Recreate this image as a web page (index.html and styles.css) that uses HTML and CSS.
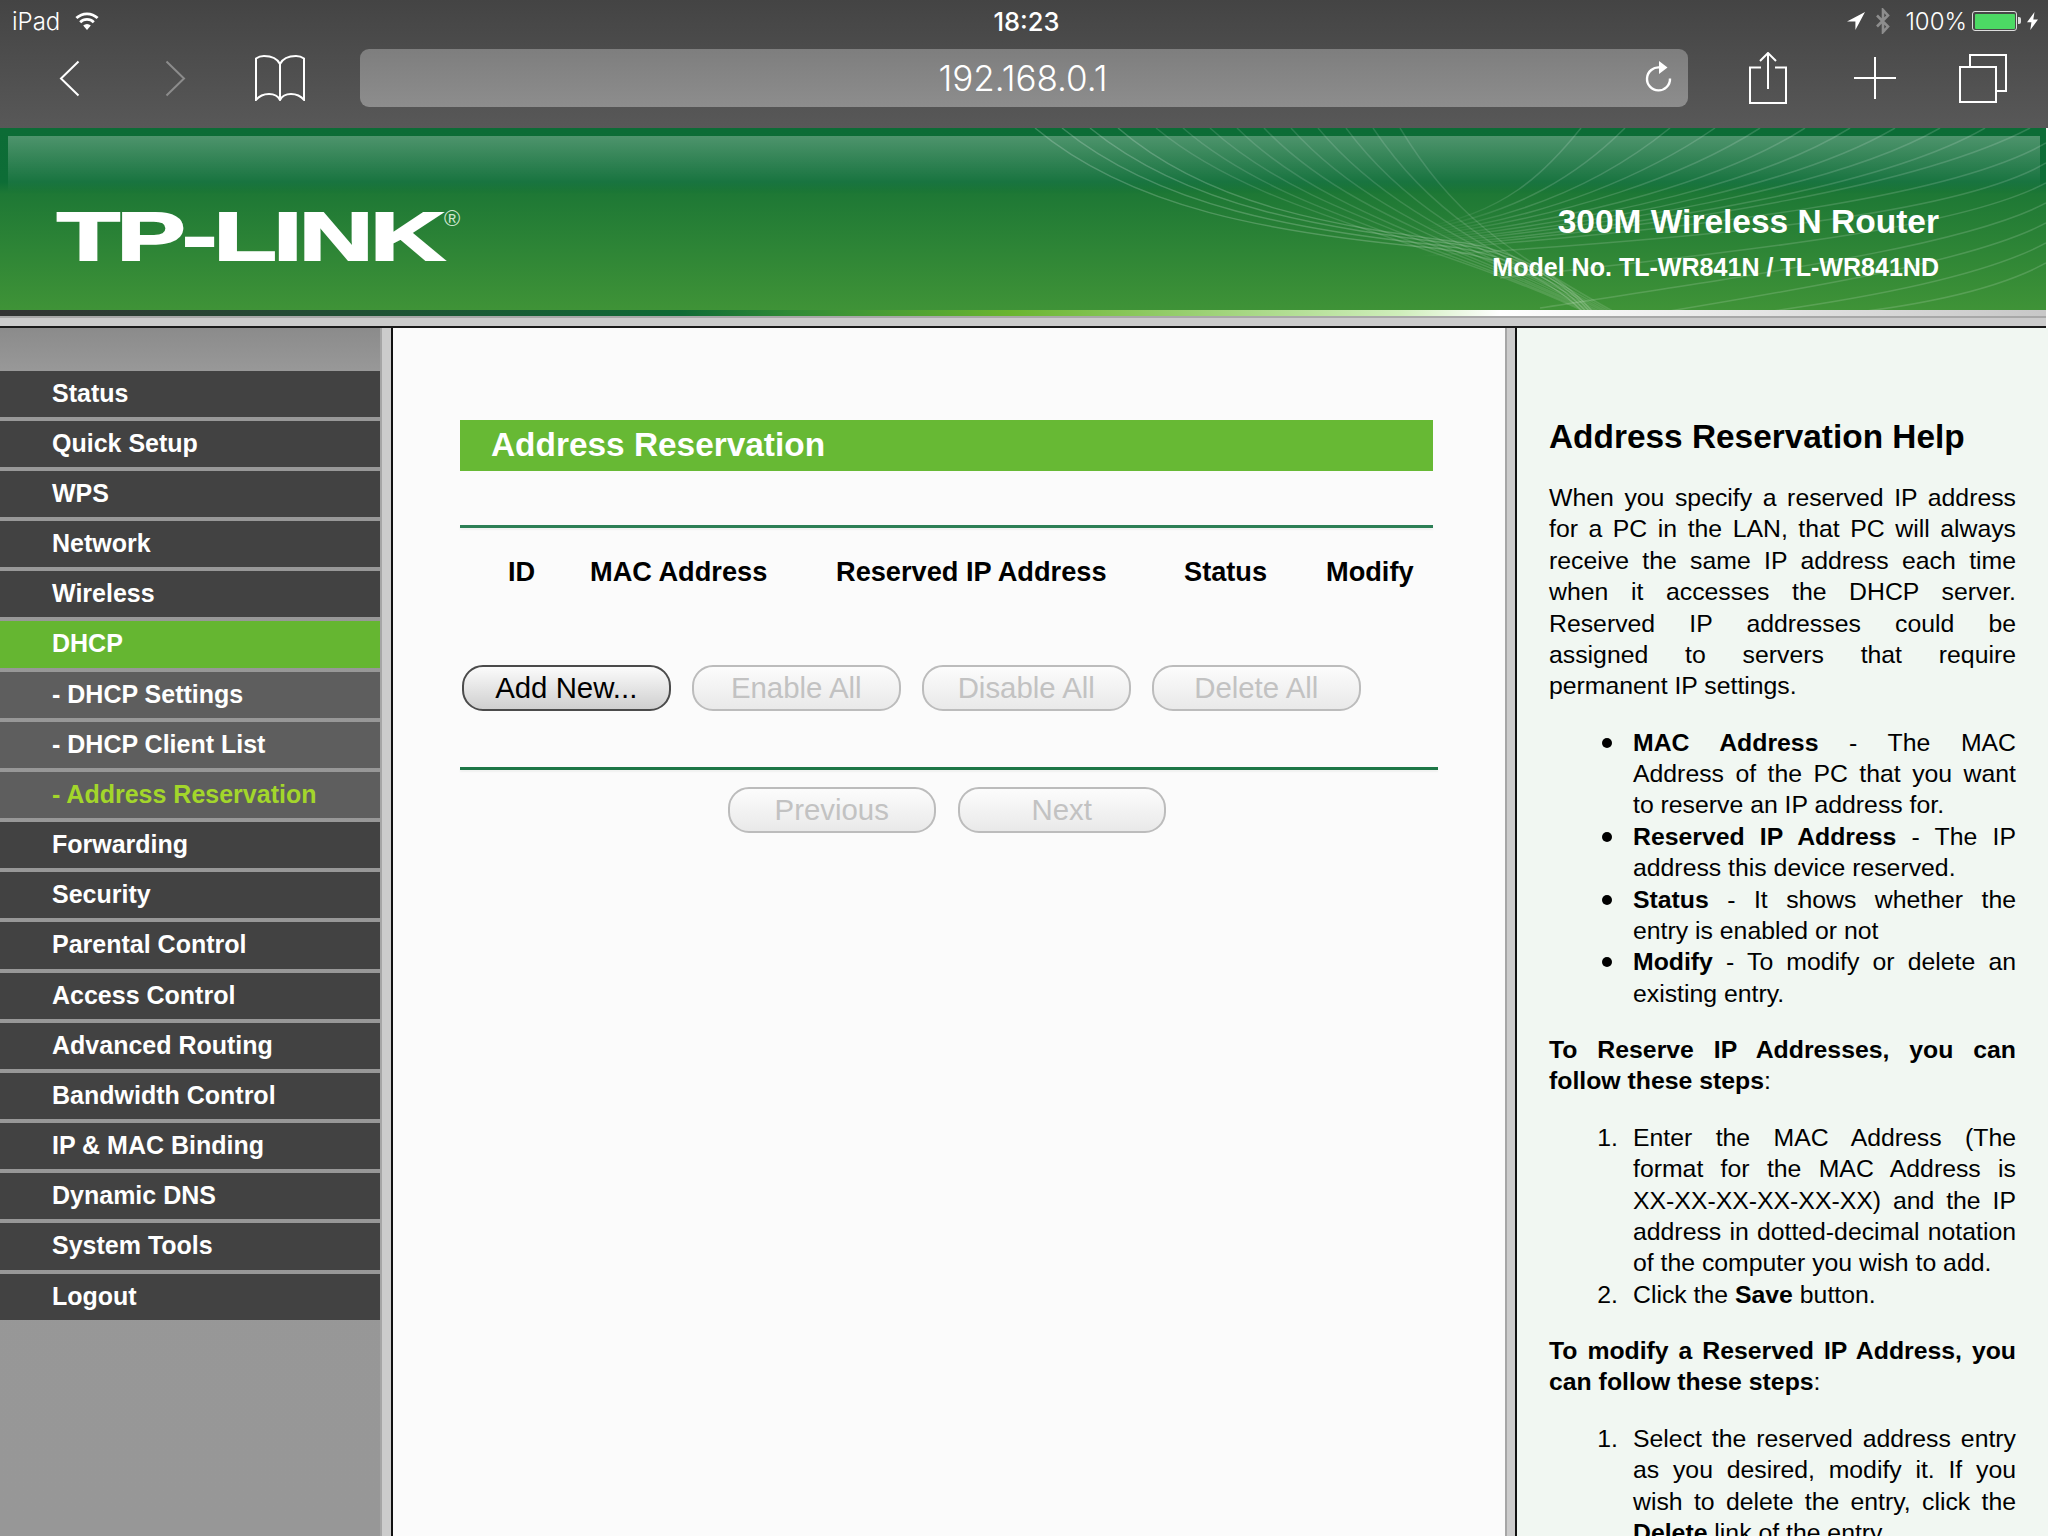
FILE: index.html
```html
<!DOCTYPE html>
<html lang="en">
<head>
<meta charset="utf-8">
<title>Address Reservation</title>
<link rel="stylesheet" href="styles.css">
</head>
<body>
<header class="chrome">
  <div class="status">
    <div class="status-left">
      <span class="carrier">iPad</span>
      <svg class="ic-wifi" viewBox="0 0 24 18"><path d="M12 18 8.200 13.600a5.400 5.400 0 0 1 7.600 0Z" fill="#fff"/><path d="M5.200 10.200a9.800 9.800 0 0 1 13.600 0M1.400 6.100a15.200 15.200 0 0 1 21.200 0" fill="none" stroke="#fff" stroke-width="2.800"/></svg>
    </div>
    <span class="clock">18:23</span>
    <div class="status-right">
      <svg class="ic-loc" viewBox="0 0 18 18"><path d="M18 0 0 9.600h8.400V18Z" fill="#fff"/></svg>
      <svg class="ic-bt" viewBox="0 0 16 26"><path d="M2 7.500 13 18.500 8 24V2l5 5.500L2 18.500" fill="none" stroke="#8d8d8d" stroke-width="2.600"/></svg>
      <span class="pct">100%</span>
      <span class="battery"><span class="battery-fill"></span></span>
      <svg class="ic-bolt" viewBox="0 0 11 18"><path d="M7.500 0 0 10.300h4.400L3.300 18 11 7.400H6.300Z" fill="#fff"/></svg>
    </div>
  </div>
  <nav class="tools">
    <svg class="ic-back" viewBox="0 0 21 37"><path d="M19.500 1.500 2 18.500 19.500 35.500" fill="none" stroke="#fff" stroke-width="2"/></svg>
    <svg class="ic-fwd" viewBox="0 0 21 37"><path d="M1.500 1.500 19 18.500 1.500 35.500" fill="none" stroke="#8c8c8c" stroke-width="2"/></svg>
    <svg class="ic-book" viewBox="0 0 50 46"><path d="M25 9C22 3 15 1 9 1 6 1 3 2 1 3.500V45C5 40 10 39 14 39 19 39 23 41 25 45 27 41 31 39 36 39 40 39 45 40 49 45V3.500C47 2 44 1 41 1 35 1 28 3 25 9ZM25 9V44" fill="none" stroke="#fff" stroke-width="2"/></svg>
    <div class="address">
      <span class="url">192.168.0.1</span>
      <svg class="ic-reload" viewBox="0 0 27 31"><path d="M15 6.500A11.500 11.500 0 1 0 25 17.500" fill="none" stroke="#fff" stroke-width="2.400"/><path d="M14 0 22.500 6.500 14 13Z" fill="#fff"/></svg>
    </div>
    <svg class="ic-share" viewBox="0 0 38 52"><path d="M12 15.500H1V51H37V15.500H26M19 37V2M11 9 19 1 27 9" fill="none" stroke="#fff" stroke-width="2"/></svg>
    <svg class="ic-plus" viewBox="0 0 42 42"><path d="M21 0V42M0 21H42" fill="none" stroke="#fff" stroke-width="2"/></svg>
    <svg class="ic-tabs" viewBox="0 0 48 49"><path d="M1 13H37V48H1ZM11 13V1H47V37H37" fill="none" stroke="#fff" stroke-width="2"/></svg>
  </nav>
</header>

<section class="banner">
  <svg class="waves" viewBox="0 0 2046 188" preserveAspectRatio="none">
    <defs>
      <linearGradient id="fan-fade" gradientUnits="userSpaceOnUse" x1="1420" y1="0" x2="1520" y2="0">
        <stop offset="0" stop-color="#fff" stop-opacity="0"/>
        <stop offset="1" stop-color="#fff" stop-opacity=".15"/>
      </linearGradient>
    </defs>
    <g class="wave-lines edge">
      <path d="M1035 0C1130 80 1270 105 1434 120C1500 128 1560 155 1590 192"/>
      <path d="M1062 0C1160 80 1300 102 1445 118C1510 126 1565 155 1593 192"/>
      <path d="M1090 0C1190 82 1330 100 1455 116C1515 124 1570 155 1596 192"/>
      <path d="M1118 0C1215 84 1355 100 1465 115C1520 124 1572 155 1599 192"/>
    </g>
    <g class="wave-lines">
      <path d="M1156 0C1263 89 1431 108 1602 192"/>
      <path d="M1183 0C1284 88 1438 110 1605 192"/>
      <path d="M1210 0C1305 87 1446 111 1608 192"/>
      <path d="M1237 0C1325 87 1454 113 1611 192"/>
      <path d="M1264 0C1346 86 1462 114 1614 192"/>
      <path d="M1291 0C1367 85 1469 116 1617 192"/>
      <path d="M1318 0C1388 84 1477 117 1620 192"/>
      <path d="M1346 0C1408 84 1485 119 1623 192"/>
      <path d="M1373 0C1429 83 1492 120 1626 192"/>
      <path d="M1400 0C1450 82 1500 122 1629 192"/>
    </g>
    <g class="fan-lines" stroke="url(#fan-fade)">
      <path d="M1581 0C1545 45 1505 85 1420 100"/>
      <path d="M1625 0C1580 45 1520 85 1420 102"/>
      <path d="M1670 0C1615 45 1535 88 1420 104"/>
      <path d="M1715 0C1650 45 1550 90 1420 106"/>
      <path d="M1760 0C1690 45 1570 90 1420 108"/>
      <path d="M1805 0C1730 48 1590 92 1420 110"/>
      <path d="M1850 0C1770 50 1610 93 1420 112"/>
      <path d="M1895 0C1810 50 1630 95 1420 114"/>
      <path d="M1940 0C1850 52 1650 95 1420 116"/>
      <path d="M1985 0C1890 55 1670 97 1420 118"/>
      <path d="M2030 0C1925 55 1690 98 1420 120"/>
      <path d="M2046 15C1950 70 1710 100 1420 122"/>
      <path d="M2046 35C1960 85 1740 108 1420 128"/>
      <path d="M2046 55C1960 100 1770 120 1500 150"/>
      <path d="M2046 75C1970 115 1800 140 1540 180"/>
      <path d="M2046 95C1980 130 1840 155 1640 188"/>
      <path d="M2046 115C1990 145 1880 170 1720 190"/>
      <path d="M2046 135C2000 160 1920 180 1800 190"/>
    </g>
  </svg>
  <div class="gloss"></div>
  <div class="banner-row">
    <div class="logo"><span class="logo-text">TP-LINK</span><span class="logo-reg">®</span></div>
    <div class="product">
      <div class="product-name">300M Wireless N Router</div>
      <div class="product-model">Model No. TL-WR841N / TL-WR841ND</div>
    </div>
  </div>
  <div class="strip"></div>
</section>
<div class="divider"></div>

<main class="frames">
  <aside class="sidebar">
    <ul class="menu">
      <li class="item">Status</li>
      <li class="item">Quick Setup</li>
      <li class="item">WPS</li>
      <li class="item">Network</li>
      <li class="item">Wireless</li>
      <li class="item active">DHCP</li>
      <li class="item sub">- DHCP Settings</li>
      <li class="item sub">- DHCP Client List</li>
      <li class="item sub current">- Address Reservation</li>
      <li class="item">Forwarding</li>
      <li class="item">Security</li>
      <li class="item">Parental Control</li>
      <li class="item">Access Control</li>
      <li class="item">Advanced Routing</li>
      <li class="item">Bandwidth Control</li>
      <li class="item">IP &amp; MAC Binding</li>
      <li class="item">Dynamic DNS</li>
      <li class="item">System Tools</li>
      <li class="item">Logout</li>
    </ul>
  </aside>
  <div class="gutter"></div>
  <section class="content">
    <h2 class="title">Address Reservation</h2>
    <div class="rule"></div>
    <div class="thead">
      <span>ID</span><span>MAC Address</span><span>Reserved IP Address</span><span>Status</span><span>Modify</span>
    </div>
    <div class="actions">
      <button class="btn">Add New...</button>
      <button class="btn off">Enable All</button>
      <button class="btn off">Disable All</button>
      <button class="btn off">Delete All</button>
    </div>
    <div class="rule wide"></div>
    <div class="actions pager">
      <button class="btn off">Previous</button>
      <button class="btn off">Next</button>
    </div>
  </section>
  <div class="gutter narrow"></div>
  <section class="help">
    <h1>Address Reservation Help</h1>
    <p class="filled">When you specify a reserved IP address for a PC in the LAN, that PC will always receive the same IP address each time when it accesses the DHCP server. <span class="line">Reserved IP addresses could be</span> <span class="line">assigned to servers that require</span> <span class="line end">permanent IP settings.</span></p>
    <ul>
      <li><b>MAC Address</b> - The MAC Address of the PC that you want to reserve an IP address for.</li>
      <li><b>Reserved IP Address</b> - The IP address this device reserved.</li>
      <li><b>Status</b> - It shows whether the entry is enabled or not</li>
      <li><b>Modify</b> - To modify or delete an existing entry.</li>
    </ul>
    <p><b>To Reserve IP Addresses, you can follow these steps</b>:</p>
    <ol>
      <li>Enter the MAC Address (The format for the MAC Address is <span class="nowrap">XX-XX-XX-XX-XX-XX)</span> and the IP address in dotted-decimal notation of the computer you wish to add.</li>
      <li>Click the <b>Save</b> button.</li>
    </ol>
    <p><b>To modify a Reserved IP Address, you can follow these steps</b>:</p>
    <ol>
      <li>Select the reserved address entry as you desired, modify it. If you wish to delete the entry, click the <b>Delete</b> link of the entry.</li>
    </ol>
  </section>
</main>
</body>
</html>
```
FILE: styles.css
```css
* { box-sizing: border-box; }
html, body { margin: 0; padding: 0; height: 1536px; overflow: hidden; background: #fff; }
body { font-family: "Liberation Sans", Arial, sans-serif; display: flex; flex-direction: column; }

/* browser chrome */
.chrome { height: 128px; flex: none; background: linear-gradient(#444 0, #585858 100%); color: #fff; font-family: Inter, "Liberation Sans", sans-serif; }
.status { height: 42px; display: grid; grid-template-columns: 1fr auto 1fr; align-items: center; padding: 0 10px 0 12px; font-size: 24px; }
.status-left { display: flex; align-items: center; gap: 15px; }
.carrier { font-weight: 300; font-size: 24px; }
.ic-wifi { width: 24px; height: 18px; }
.clock { font-weight: 500; font-size: 25.500px; margin-left: 3px; }
.status-right { display: flex; align-items: center; justify-content: flex-end; }
.ic-loc { width: 18px; height: 18px; }
.ic-bt { width: 16px; height: 26px; margin-left: 10px; }
.pct { font-weight: 300; font-size: 24px; margin-left: 14px; }
.battery { position: relative; width: 45px; height: 20px; margin-left: 5px; border: 1.500px solid #ddd; border-radius: 3px; padding: 1.500px; display: block; }
.battery::after { content: ""; position: absolute; right: -5px; top: 5px; width: 3px; height: 7px; background: #ddd; border-radius: 0 2px 2px 0; }
.battery-fill { display: block; height: 100%; background: #4cd964; border-radius: 1px; }
.ic-bolt { width: 11px; height: 18px; margin-left: 10px; }

.tools { height: 58px; margin-top: 7px; display: flex; align-items: center; padding-left: 59px; }
.ic-back { width: 21px; height: 37px; flex: none; }
.ic-fwd { width: 21px; height: 37px; flex: none; margin-left: 85px; }
.ic-book { width: 50px; height: 46px; flex: none; margin-left: 69px; }
.address { width: 1328px; height: 58px; flex: none; margin-left: 55px; border-radius: 9px; background: linear-gradient(#7e7e7e, #8d8d8d); position: relative; display: flex; align-items: center; justify-content: center; }
.url { font-weight: 300; font-size: 35px; margin-left: -2px; }
.ic-reload { position: absolute; right: 16px; top: 12px; width: 27px; height: 31px; }
.ic-share { width: 38px; height: 52px; flex: none; margin-left: 61px; }
.ic-plus { width: 42px; height: 42px; flex: none; margin-left: 67px; }
.ic-tabs { width: 48px; height: 49px; flex: none; margin-left: 63px; }

/* router banner */
.banner { position: relative; height: 188px; flex: none; margin-right: 2px; overflow: hidden; background: linear-gradient(#0c6c36 0, #0d6d36 54px, #1e7835 66px, #3f9337 182px); color: #fff; }
.waves { position: absolute; inset: 0; width: 100%; height: 100%; }
.wave-lines path { fill: none; stroke: #fff; stroke-opacity: .13; stroke-width: 1.500; }
.wave-lines.edge path { stroke-opacity: .2; }
.fan-lines path { fill: none; stroke-width: 1.500; }
.gloss { position: absolute; left: 8px; right: 6px; top: 8px; height: 56px; background: linear-gradient(rgba(255,255,255,.27), rgba(255,255,255,0)); }
.banner-row { position: relative; height: 182px; display: flex; justify-content: space-between; padding: 0 107px 0 57px; }
.logo { margin-top: 73px; height: 72px; display: flex; align-items: flex-start; }
.logo-text { display: block; width: 387px; font-size: 69px; line-height: 72px; font-weight: 700; letter-spacing: -2px; transform: scaleX(1.49); transform-origin: 0 50%; -webkit-text-stroke: 2px #fff; white-space: nowrap; }
.logo-reg { font-size: 22px; line-height: 22px; margin-top: 7px; color: #cfe6cf; }
.product { text-align: right; font-weight: 700; margin-top: 74px; }
.product-name { font-size: 33.500px; line-height: 40px; }
.product-model { font-size: 25.050px; line-height: 30px; margin-top: 10px; }
.strip { position: relative; height: 6px; background: linear-gradient(90deg, #333 0, #0f6a35 680px, #2f8a36 790px, #6ab530 1010px, #cfeebb 1400px, #fff 1500px, #c8c8c8 2040px); }
.divider { height: 12px; flex: none; margin-right: 2px; background: #ccc; border-top: 2px solid #a8a8a8; border-bottom: 2px solid #1a1a1a; }

/* frames */
.frames { flex: 1; min-height: 0; display: flex; overflow: hidden; }
.sidebar { width: 380px; flex: none; background: linear-gradient(#8b8b8b 0, #989898 42px, #979797 100%); padding-top: 42.700px; }
.menu { list-style: none; margin: 0; padding: 0; }
.item { height: 46.170px; margin-bottom: 4px; line-height: 45px; padding-left: 52px; background: #424242; color: #fff; font-size: 25px; font-weight: 700; }
.item.active { background: #65b631; }
.item.sub { background: #5e5e5e; }
.item.current { color: #a3d62b; }
.gutter { width: 13px; flex: none; background: #ccc; border-left: 2px solid #a6a6a6; border-right: 2px solid #111; }
.gutter.narrow { width: 12px; }
.content { width: 1112px; flex: none; background: #fbfbfb; padding: 92px 0 0 67px; }
.title { margin: 0; width: 973px; height: 51px; line-height: 50px; padding-left: 31px; background: #67b934; color: #fff; font-size: 33.400px; font-weight: 700; }
.rule { width: 973px; height: 3px; margin-top: 54px; background: #2c7f55; box-shadow: 0 2px 2px rgba(60,90,70,.06); }
.rule.wide { width: 978px; margin-top: 56px; background: #1d7646; }
.thead { display: grid; grid-template-columns: 82px 246px 348px 142px auto; height: 88px; align-items: center; padding-left: 48px; font-size: 27.200px; font-weight: 700; color: #000; }
.actions { display: flex; gap: 21.500px; margin-top: 49px; padding-left: 2px; }
.pager { margin-top: 17px; padding-left: 267.500px; }
.btn { width: 208.500px; height: 46px; flex: none; padding: 0; border: 2px solid #4b4b4b; border-radius: 21px; background: linear-gradient(#fbfbfb, #cfcfcf); font-family: "Liberation Sans", Arial, sans-serif; font-size: 29.400px; line-height: 42px; color: #000; }
.btn.off { border-color: #bcbcbc; background: linear-gradient(#fcfcfc, #e9e9e9); color: #c2c2c2; }

/* help */
.help { flex: 1; min-width: 0; background: #f1f7f2; padding: 89px 32px 0; color: #000; font-size: 24.800px; line-height: 31.380px; text-align: justify; }
.help h1 { margin: 0 0 25px; font-size: 33.400px; line-height: 40px; font-weight: 700; text-align: left; }
.help p { margin: 0; }
.help p.filled { text-align-last: justify; }
.line { display: block; }
.line.end { text-align-last: left; }
.help ul, .help ol { margin: 25px 0; padding: 0 0 0 84px; list-style: none; }
.help ol { counter-reset: step; }
.help li { position: relative; }
.help ul > li::before { content: ""; position: absolute; left: -31px; top: 11px; width: 10px; height: 10px; border-radius: 50%; background: #000; }
.help ol > li { counter-increment: step; }
.help ol > li::before { content: counter(step) "."; position: absolute; right: 100%; margin-right: 15px; top: 0; }
.nowrap { white-space: nowrap; }
```
